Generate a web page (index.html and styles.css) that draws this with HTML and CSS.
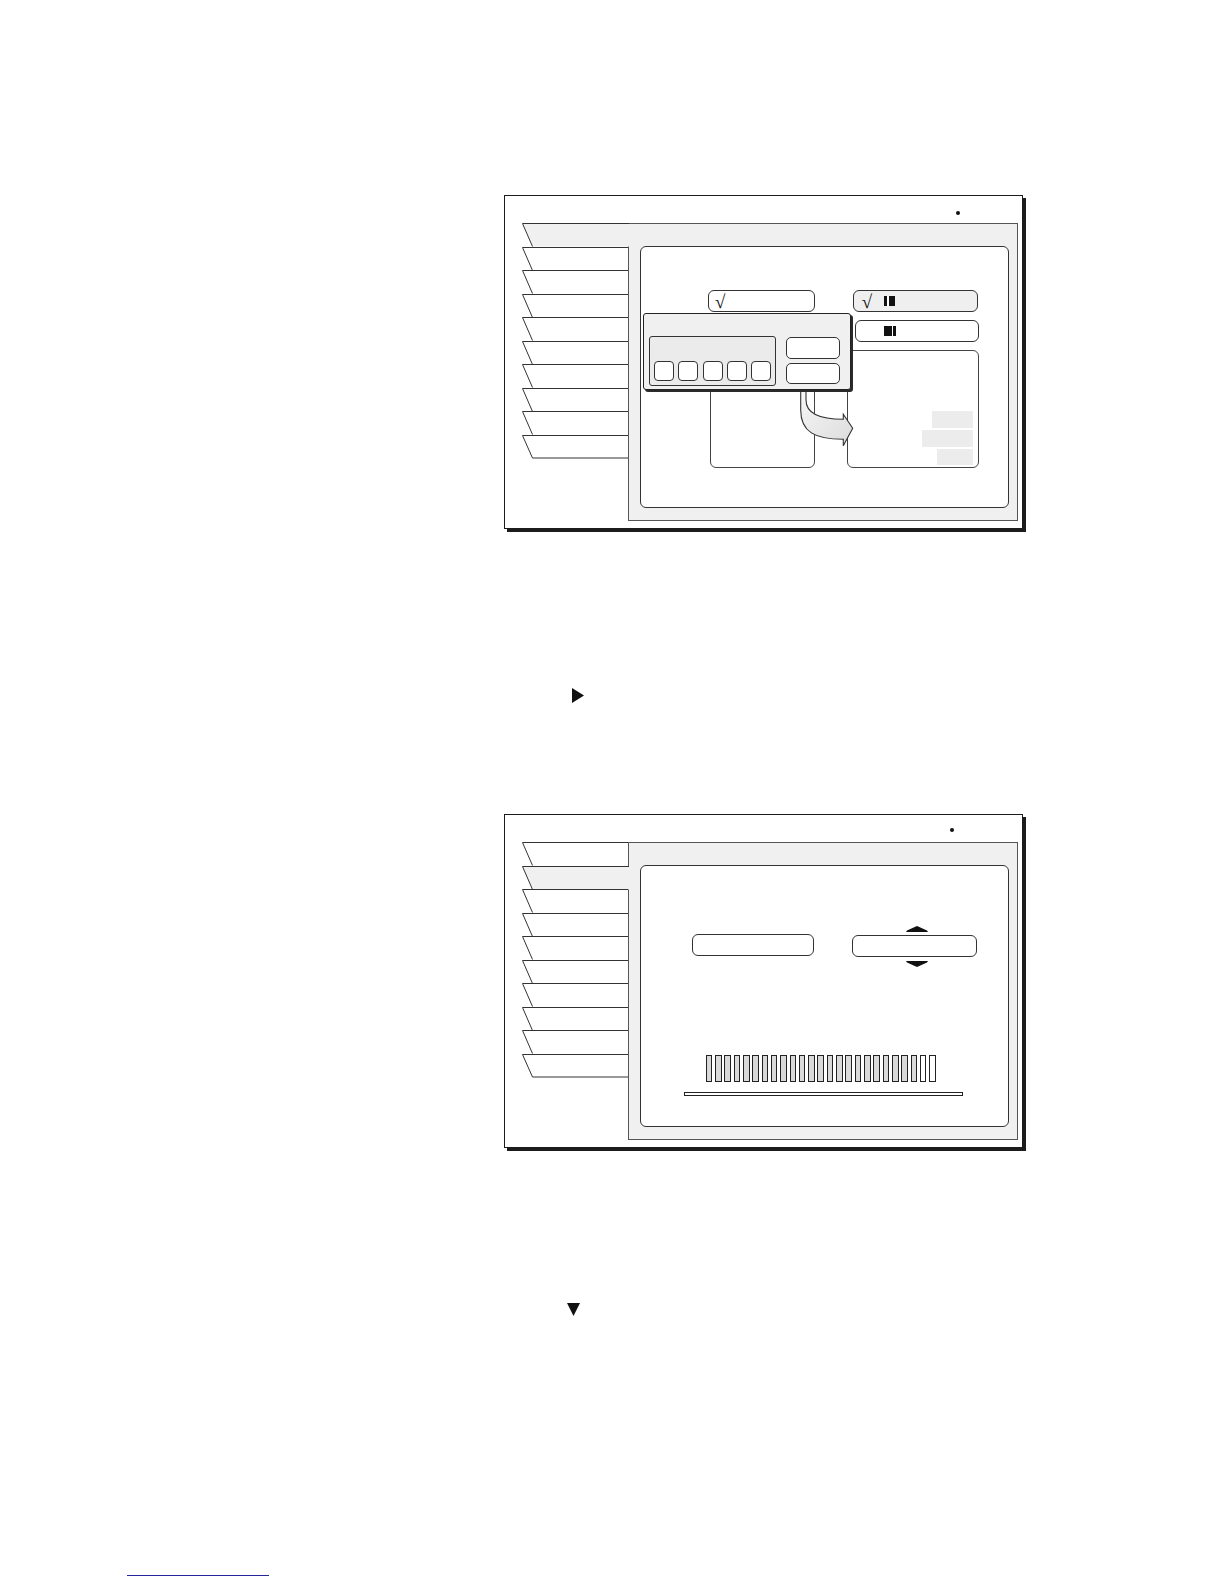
FILE: index.html
```html
<!DOCTYPE html>
<html lang="en">
<head>
<meta charset="utf-8">
<title>Menu screens</title>
<link rel="stylesheet" href="styles.css">
</head>
<body>
<main class="page">

  <figure class="screen screen-1">
    <span class="indicator"></span>
    <div class="tabs">
      <div class="tab tab-active"><svg width="107" height="23.5" viewBox="0 0 107 23.5"><path class="tab-bg" d="M0.5 0.5H107V23.5H10.5Z"/><path class="tab-edge" d="M107 0.5H0.5L10.5 23.5"/></svg></div>
      <div class="tab"><svg width="107" height="23.5" viewBox="0 0 107 23.5"><path class="tab-bg" d="M0.5 0.5H106V23.5H10.5Z"/><path class="tab-edge" d="M106 0.5H0.5L10.5 23.5"/></svg></div>
      <div class="tab"><svg width="107" height="23.5" viewBox="0 0 107 23.5"><path class="tab-bg" d="M0.5 0.5H106V23.5H10.5Z"/><path class="tab-edge" d="M106 0.5H0.5L10.5 23.5"/></svg></div>
      <div class="tab"><svg width="107" height="23.5" viewBox="0 0 107 23.5"><path class="tab-bg" d="M0.5 0.5H106V23.5H10.5Z"/><path class="tab-edge" d="M106 0.5H0.5L10.5 23.5"/></svg></div>
      <div class="tab"><svg width="107" height="23.5" viewBox="0 0 107 23.5"><path class="tab-bg" d="M0.5 0.5H106V23.5H10.5Z"/><path class="tab-edge" d="M106 0.5H0.5L10.5 23.5"/></svg></div>
      <div class="tab"><svg width="107" height="23.5" viewBox="0 0 107 23.5"><path class="tab-bg" d="M0.5 0.5H106V23.5H10.5Z"/><path class="tab-edge" d="M106 0.5H0.5L10.5 23.5"/></svg></div>
      <div class="tab"><svg width="107" height="23.5" viewBox="0 0 107 23.5"><path class="tab-bg" d="M0.5 0.5H106V23.5H10.5Z"/><path class="tab-edge" d="M106 0.5H0.5L10.5 23.5"/></svg></div>
      <div class="tab"><svg width="107" height="23.5" viewBox="0 0 107 23.5"><path class="tab-bg" d="M0.5 0.5H106V23.5H10.5Z"/><path class="tab-edge" d="M106 0.5H0.5L10.5 23.5"/></svg></div>
      <div class="tab"><svg width="107" height="23.5" viewBox="0 0 107 23.5"><path class="tab-bg" d="M0.5 0.5H106V23.5H10.5Z"/><path class="tab-edge" d="M106 0.5H0.5L10.5 23.5"/></svg></div>
      <div class="tab"><svg width="107" height="23.5" viewBox="0 0 107 23.5"><path class="tab-bg" d="M0.5 0.5H106V23.5H10.5Z"/><path class="tab-edge" d="M106 0.5H0.5L10.5 23H106"/></svg></div>
    </div>
    <div class="panel">
      <div class="content content-1">
        <div class="col col-left">
          <div class="pill pill-source"><span class="check">√</span></div>
          <div class="box box-source"></div>
        </div>
        <div class="col col-right">
          <div class="pill pill-on pill-option"><span class="check">√</span><span class="chip chip-a"></span></div>
          <div class="pill pill-option pill-nocheck"><span class="chip chip-b"></span></div>
          <div class="box box-target">
            <span class="slot slot-1"></span>
            <span class="slot slot-2"></span>
            <span class="slot slot-3"></span>
          </div>
        </div>
        <svg class="flow-arrow" width="368" height="262" viewBox="0 0 368 262">
          <defs>
            <linearGradient id="arrowFill" x1="0" y1="0" x2="1" y2="1">
              <stop offset="0" stop-color="#f7f7f7"/>
              <stop offset="1" stop-color="#dcdcdc"/>
            </linearGradient>
          </defs>
          <path d="M165 141V153C165 165 177 172.3 202.3 172.3V167.3L211.7 181.3L202.3 198.7V192.3C174 192.3 159.7 185 159.7 163V141Z" fill="url(#arrowFill)" stroke="#333" stroke-width="1.1" stroke-linejoin="miter"/>
        </svg>
        <div class="popup">
          <div class="keypad">
            <span class="key"></span>
            <span class="key"></span>
            <span class="key"></span>
            <span class="key"></span>
            <span class="key"></span>
          </div>
          <div class="popup-buttons">
            <span class="button"></span>
            <span class="button button-low"></span>
          </div>
        </div>
      </div>
    </div>
  </figure>

  <div class="step step-right">
    <svg width="12" height="15" viewBox="0 0 12 15"><polygon points="0,0 12,7.5 0,15" fill="#111"/></svg>
  </div>

  <figure class="screen screen-2">
    <span class="indicator"></span>
    <div class="tabs">
      <div class="tab"><svg width="107" height="23.5" viewBox="0 0 107 23.5"><path class="tab-bg" d="M0.5 0.5H106V23.5H10.5Z"/><path class="tab-edge" d="M106 0.5H0.5L10.5 23.5"/></svg></div>
      <div class="tab tab-active"><svg width="107" height="23.5" viewBox="0 0 107 23.5"><path class="tab-bg" d="M0.5 0.5H107V23.5H10.5Z"/><path class="tab-edge" d="M107 0.5H0.5L10.5 23.5"/></svg></div>
      <div class="tab"><svg width="107" height="23.5" viewBox="0 0 107 23.5"><path class="tab-bg" d="M0.5 0.5H106V23.5H10.5Z"/><path class="tab-edge" d="M106 0.5H0.5L10.5 23.5"/></svg></div>
      <div class="tab"><svg width="107" height="23.5" viewBox="0 0 107 23.5"><path class="tab-bg" d="M0.5 0.5H106V23.5H10.5Z"/><path class="tab-edge" d="M106 0.5H0.5L10.5 23.5"/></svg></div>
      <div class="tab"><svg width="107" height="23.5" viewBox="0 0 107 23.5"><path class="tab-bg" d="M0.5 0.5H106V23.5H10.5Z"/><path class="tab-edge" d="M106 0.5H0.5L10.5 23.5"/></svg></div>
      <div class="tab"><svg width="107" height="23.5" viewBox="0 0 107 23.5"><path class="tab-bg" d="M0.5 0.5H106V23.5H10.5Z"/><path class="tab-edge" d="M106 0.5H0.5L10.5 23.5"/></svg></div>
      <div class="tab"><svg width="107" height="23.5" viewBox="0 0 107 23.5"><path class="tab-bg" d="M0.5 0.5H106V23.5H10.5Z"/><path class="tab-edge" d="M106 0.5H0.5L10.5 23.5"/></svg></div>
      <div class="tab"><svg width="107" height="23.5" viewBox="0 0 107 23.5"><path class="tab-bg" d="M0.5 0.5H106V23.5H10.5Z"/><path class="tab-edge" d="M106 0.5H0.5L10.5 23.5"/></svg></div>
      <div class="tab"><svg width="107" height="23.5" viewBox="0 0 107 23.5"><path class="tab-bg" d="M0.5 0.5H106V23.5H10.5Z"/><path class="tab-edge" d="M106 0.5H0.5L10.5 23.5"/></svg></div>
      <div class="tab"><svg width="107" height="23.5" viewBox="0 0 107 23.5"><path class="tab-bg" d="M0.5 0.5H106V23.5H10.5Z"/><path class="tab-edge" d="M106 0.5H0.5L10.5 23H106"/></svg></div>
    </div>
    <div class="panel">
      <div class="content content-2">
        <div class="controls">
          <div class="pill pill-value"></div>
          <div class="spinner">
            <svg class="spin-up" width="22" height="6" viewBox="0 0 22 6"><polygon points="0,6 1,4.4 11,0 21,4.4 22,6" fill="#111"/></svg>
            <div class="pill pill-spin"></div>
            <svg class="spin-down" width="22" height="6" viewBox="0 0 22 6"><polygon points="0,0 22,0 21,1.6 11,6 1,1.6" fill="#111"/></svg>
          </div>
        </div>
        <div class="bars">
          <span class="bar"></span><span class="bar"></span><span class="bar"></span><span class="bar"></span><span class="bar"></span>
          <span class="bar"></span><span class="bar"></span><span class="bar"></span><span class="bar"></span><span class="bar"></span>
          <span class="bar"></span><span class="bar"></span><span class="bar"></span><span class="bar"></span><span class="bar"></span>
          <span class="bar"></span><span class="bar"></span><span class="bar"></span><span class="bar"></span><span class="bar"></span>
          <span class="bar"></span><span class="bar"></span><span class="bar"></span>
          <span class="bar bar-empty"></span><span class="bar bar-empty"></span>
        </div>
        <div class="track"></div>
      </div>
    </div>
  </figure>

  <div class="step step-down">
    <svg width="13" height="13" viewBox="0 0 13 13"><polygon points="0,0 13,0 6.5,13" fill="#111"/></svg>
  </div>

  <div class="footnote-rule"></div>
</main>
</body>
</html>
```

FILE: styles.css
```css
* {
  box-sizing: border-box;
}

html,
body {
  margin: 0;
  padding: 0;
  background: #ffffff;
}

body {
  font-family: "Liberation Serif", "DejaVu Serif", serif;
  color: #111;
}

.page {
  width: 1224px;
  height: 1584px;
  padding-top: 195px;
  overflow: hidden;
}

/* ---------- screen frame ---------- */

.screen {
  position: relative;
  margin: 0 0 0 504px;
  width: 519px;
  height: 334px;
  border: 1px solid #1c1c1c;
  box-shadow: 3px 3px 0 #1c1c1c;
  background: #ffffff;
  display: flex;
  align-items: flex-start;
  padding: 27px 4px 0 17px;
}

.indicator {
  position: absolute;
  top: 14.7px;
  left: 451px;
  width: 4px;
  height: 4px;
  border-radius: 50%;
  background: #111;
}

.screen-2 .indicator {
  top: 13px;
  left: 444.7px;
}

/* ---------- tabs ---------- */

.tabs {
  position: relative;
  z-index: 1;
  width: 107px;
  margin-right: -1px;
  display: flex;
  flex-direction: column;
}

.tab {
  height: 23.5px;
}

.tab svg {
  display: block;
  overflow: visible;
}

.tab-bg {
  fill: #ffffff;
}

.tab-active .tab-bg {
  fill: #f0f0f0;
}

.tab-edge {
  fill: none;
  stroke: #333;
  stroke-width: 1;
}

/* ---------- panel ---------- */

.panel {
  width: 390px;
  height: 298px;
  border: 1px solid #555;
  background: #f0f0f0;
  padding: 22px 8.5px 12px 11px;
}

.content {
  position: relative;
  width: 368.5px;
  height: 262px;
  border: 1px solid #333;
  border-radius: 6px;
  background: #ffffff;
}

/* ---------- shared controls ---------- */

.pill {
  height: 21.7px;
  border: 1px solid #333;
  border-radius: 6px;
  background: #ffffff;
  display: flex;
  align-items: center;
  padding-left: 6px;
}

.pill-on {
  background: #efefef;
}

.check {
  display: inline-block;
  width: 22px;
  font-family: "Liberation Serif", "DejaVu Serif", serif;
  font-size: 19px;
  font-style: italic;
  line-height: 1;
  color: #111;
  margin-top: 1px;
}

.chip {
  width: 11.7px;
  height: 10px;
  display: inline-block;
}

.chip-a {
  background: linear-gradient(to right, #111 0, #111 3.3px, #fff 3.3px, #fff 4.8px, #111 4.8px, #111 100%);
}

.chip-b {
  background: linear-gradient(to right, #111 0, #111 8px, #fff 8px, #fff 9.4px, #111 9.4px, #111 100%);
}

.box {
  border: 1px solid #444;
  border-radius: 6px;
  background: #ffffff;
}

/* ---------- screen 1 content ---------- */

.content-1 {
  display: grid;
  grid-template-columns: 106.7px 132.6px;
  column-gap: 31.7px;
  align-items: start;
  padding: 43px 0 0 67.3px;
}

.col {
  display: flex;
  flex-direction: column;
}

.pill-source {
  width: 106.7px;
  padding-left: 5.7px;
}

.box-source {
  margin: 38.3px 0 0 1.7px;
  width: 105px;
  height: 118.3px;
}

.pill-option {
  width: 125px;
  height: 22.3px;
  margin-left: 6.6px;
  padding-left: 7.4px;
}

.pill-nocheck {
  width: 124.3px;
  height: 21.7px;
  margin-top: 7.7px;
  margin-left: 8.3px;
  padding-left: 28.3px;
}

.box-target {
  margin-top: 8.3px;
  width: 132.6px;
  height: 118.3px;
  display: flex;
  flex-direction: column;
  align-items: flex-end;
  justify-content: flex-end;
  gap: 2.3px;
  padding: 0 5.6px 2.3px 0;
}

.slot {
  display: block;
  height: 16.7px;
  background: #ececec;
}

.slot-1 {
  width: 41px;
}

.slot-2 {
  width: 50.4px;
}

.slot-3 {
  width: 35.4px;
  height: 16px;
}

.flow-arrow {
  position: absolute;
  top: 0;
  left: 0;
  z-index: 1;
}

.popup {
  position: absolute;
  z-index: 2;
  top: 66.3px;
  left: 2.3px;
  width: 207.4px;
  height: 76.7px;
  border: 1px solid #222;
  border-radius: 3px;
  box-shadow: 2px 2px 0 #2a2a2a;
  background: #f0f0f0;
  display: flex;
  align-items: flex-start;
  gap: 10.3px;
  padding: 21.7px 0 0 5px;
}

.keypad {
  width: 126.4px;
  height: 50px;
  border: 1px solid #333;
  border-radius: 3px;
  background: #ebebeb;
  display: flex;
  align-items: flex-end;
  gap: 4.2px;
  padding: 0 0 4.3px 4px;
}

.key {
  display: block;
  width: 20px;
  height: 19.7px;
  border: 1px solid #333;
  border-radius: 4px;
  background: #ffffff;
}

.popup-buttons {
  margin-top: 0.7px;
  display: flex;
  flex-direction: column;
  gap: 3.7px;
}

.button {
  display: block;
  width: 54px;
  height: 22.3px;
  border: 1px solid #333;
  border-radius: 5px;
  background: #ffffff;
}

.button-low {
  height: 21.6px;
}

/* ---------- screen 2 content ---------- */

.content-2 {
  display: flex;
  flex-direction: column;
  align-items: flex-start;
  padding-top: 60px;
}

.controls {
  margin-left: 51.3px;
  display: flex;
  align-items: flex-start;
  gap: 38.3px;
}

.pill-value {
  margin-top: 8.3px;
  width: 121.7px;
  height: 21.7px;
}

.spinner {
  display: flex;
  flex-direction: column;
  align-items: center;
}

.spinner svg {
  display: block;
  margin-left: 5.4px;
}

.spin-up {
  margin-bottom: 2.7px;
}

.pill-spin {
  width: 125px;
  height: 22.7px;
}

.spin-down {
  margin-top: 4px;
}

.bars {
  margin: 87.3px 0 0 64.7px;
  display: flex;
  gap: 2.73px;
}

.bar {
  display: block;
  width: 6.6px;
  height: 27.3px;
  border: 1px solid #222;
  background: #d9d9d9;
}

.bar-empty {
  background: #ffffff;
}

.track {
  margin: 10px 0 0 43px;
  width: 279.3px;
  height: 4.4px;
  border: 1px solid #222;
  background: #ffffff;
}

/* ---------- step markers ---------- */

.step {
  display: flex;
}

.step svg {
  display: block;
}

.step-right {
  margin: 159px 0 0 572px;
  height: 15px;
}

.screen-2 {
  margin-top: 111px;
}

.step-down {
  margin: 155px 0 0 567px;
  height: 13px;
}

.footnote-rule {
  margin: 259px 0 0 127px;
  width: 142px;
  height: 1px;
  background: #25259c;
}
```
